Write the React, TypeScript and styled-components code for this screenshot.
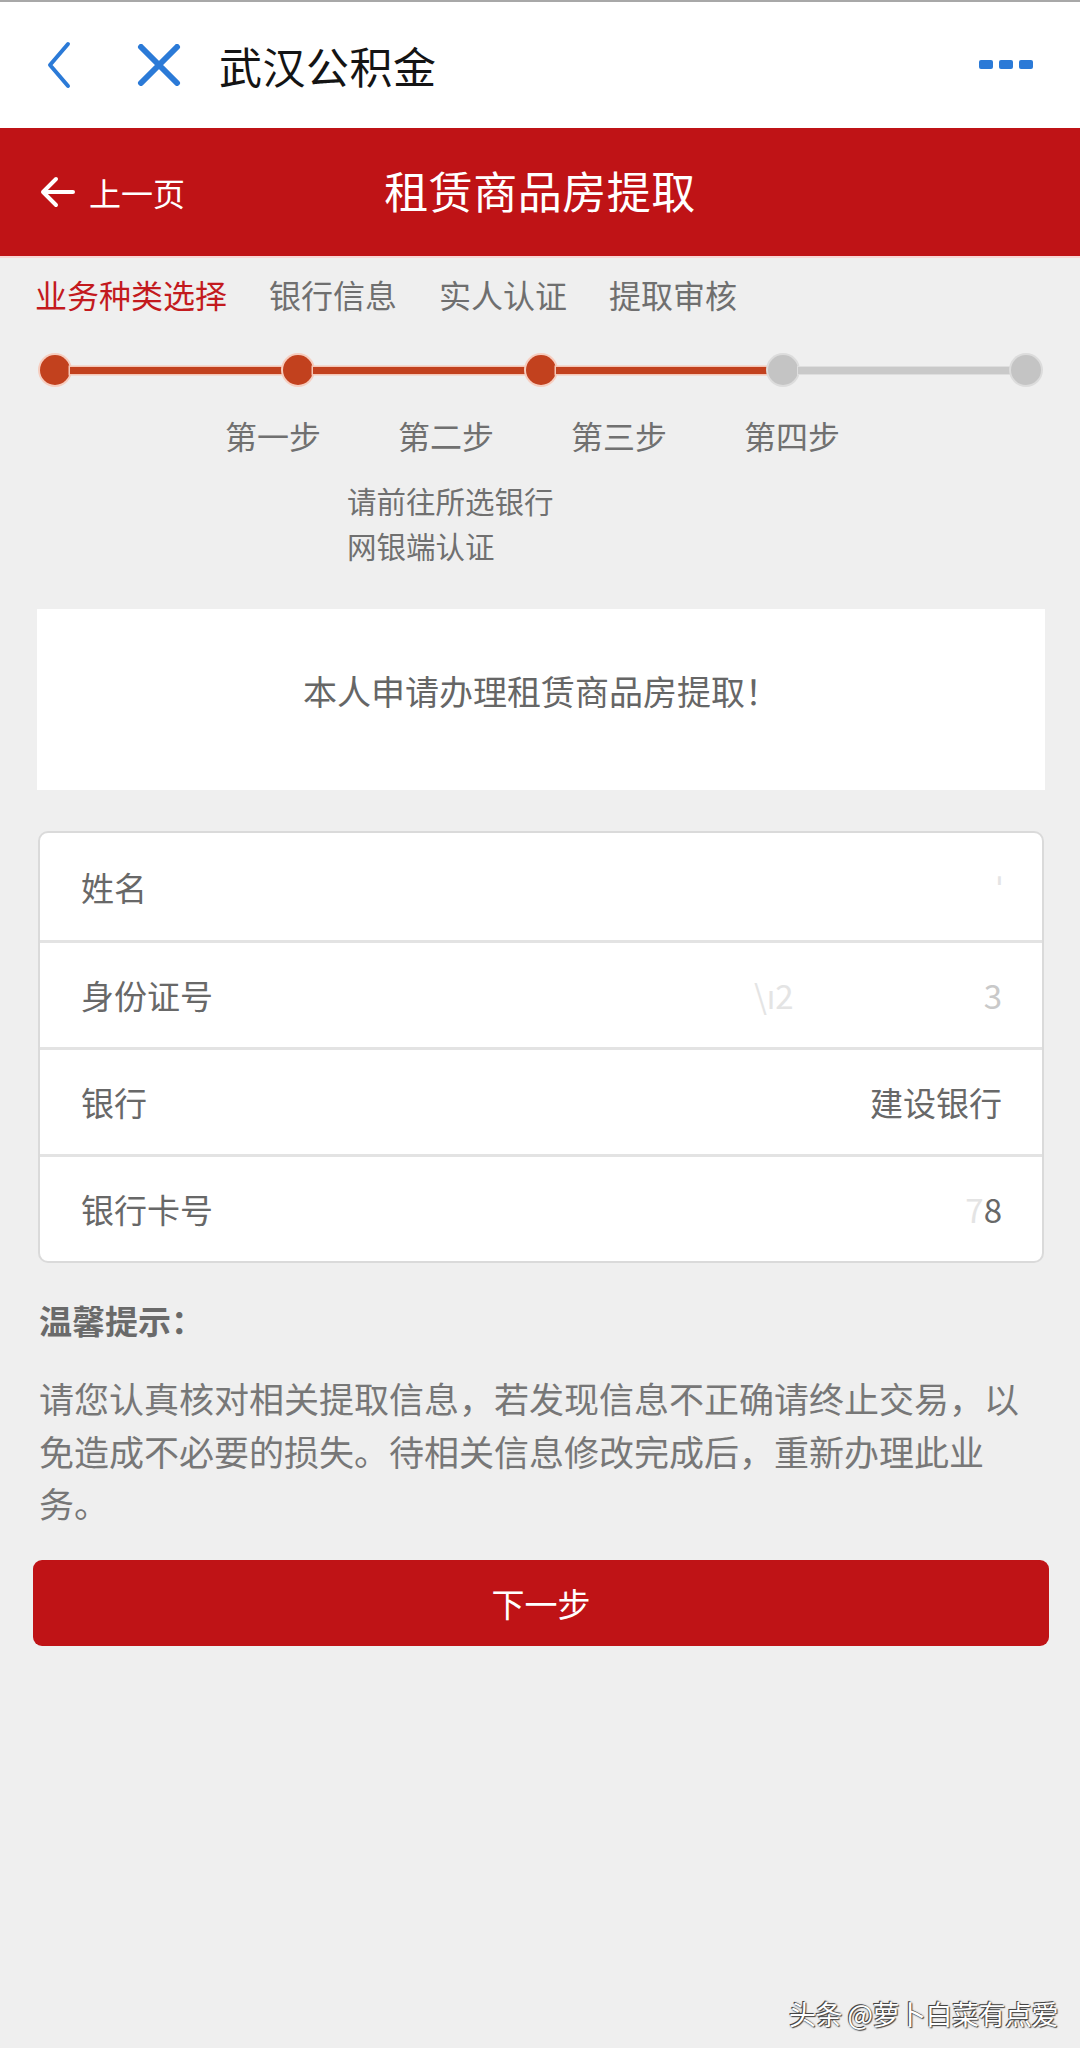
import React from "react";
import styled, { createGlobalStyle } from "styled-components";

const GlobalStyle = createGlobalStyle`
  html, body {
    margin: 0;
    padding: 0;
    background: #efefef;
  }
  body {
    font-family: "Noto Sans CJK SC", "Noto Sans", sans-serif;
    text-spacing-trim: space-all;
  }
  * { box-sizing: border-box; }
`;

const Page = styled.div`
  position: relative;
  width: 1080px;
  min-height: 2048px;
  background: #efefef;
  display: flex;
  flex-direction: column;
  overflow: hidden;
`;

const TopLine = styled.div`
  height: 2px;
  background: #a8a8a8;
`;

const Header = styled.header`
  height: 126px;
  background: #ffffff;
  display: flex;
  align-items: center;
  padding: 0 47px 0 45px;
`;

const IconButton = styled.div<{ $ml?: number }>`
  display: flex;
  align-items: center;
  margin-left: ${(p) => p.$ml ?? 0}px;
`;

const HeaderTitle = styled.h1`
  margin: 0 0 0 38px;
  font-size: 43px;
  font-weight: 400;
  color: #141414;
  letter-spacing: 0.5px;
  line-height: 1;
`;

const Spacer = styled.div`
  flex: 1;
`;

const MoreDots = styled.div`
  display: flex;
  gap: 6px;
  align-items: center;
  margin-top: -2px;
`;

const Dash = styled.span`
  width: 14px;
  height: 9px;
  border-radius: 2px;
  background: #2b7ad7;
`;

const RedBar = styled.div`
  height: 130px;
  background: #bf1316;
  display: grid;
  grid-template-columns: 1fr auto 1fr;
  align-items: center;
  border-bottom: 2px solid #f7d6d6;
`;

const BackLink = styled.div`
  display: flex;
  align-items: center;
  gap: 14px;
  padding-left: 39px;
  color: #ffffff;
  font-size: 32px;
  line-height: 1;
`;

const BarTitle = styled.div`
  color: #ffffff;
  font-size: 44px;
  line-height: 1;
  letter-spacing: 0.5px;
  margin-top: -4px;
`;

const Tabs = styled.nav`
  height: 76px;
  display: flex;
  align-items: center;
  gap: 42px;
  padding: 0 0 5px 35px;
`;

const Tab = styled.span<{ $active?: boolean }>`
  font-size: 32px;
  line-height: 1;
  color: ${(p) => (p.$active ? "#c31a1e" : "#6f6f6f")};
`;

const Progress = styled.div`
  height: 72px;
  display: flex;
  align-items: center;
  padding: 0 39px 0 40px;
`;

const Dot = styled.span<{ $done?: boolean }>`
  width: 30px;
  height: 30px;
  border-radius: 50%;
  flex: none;
  background: ${(p) => (p.$done ? "#c2411e" : "#c4c4c4")};
  box-shadow: ${(p) => (p.$done ? "0 0 0 2px #f6cdbf" : "0 0 0 2px #dcdcdc")};
`;

const Line = styled.span<{ $done?: boolean }>`
  flex: 1;
  height: 7px;
  background: ${(p) => (p.$done ? "#c2411e" : "#c9c9c9")};
  box-shadow: ${(p) => (p.$done ? "0 0 0 1.5px #f4c6b6" : "0 0 0 1px #dedede")};
`;

const StepLabels = styled.div`
  height: 58px;
  display: flex;
  align-items: center;
  gap: 77px;
  padding-left: 225px;
`;

const StepLabel = styled.span`
  font-size: 32px;
  line-height: 1;
  color: #707070;
`;

const StepNote = styled.div`
  margin: 14px 0 0 347px;
  font-size: 29.5px;
  line-height: 45px;
  color: #707070;
`;

const Statement = styled.div`
  margin: 41px 35px 0 37px;
  height: 181px;
  background: #ffffff;
  display: flex;
  align-items: center;
  justify-content: center;
  padding-bottom: 18px;
  font-size: 34px;
  color: #666666;
`;

const InfoCard = styled.div`
  margin: 41px 36px 0 38px;
  background: #ffffff;
  border: 2px solid #dadada;
  border-radius: 10px;
  overflow: hidden;
`;

const InfoRow = styled.div`
  height: 107px;
  display: flex;
  align-items: center;
  justify-content: space-between;
  padding: 0 40px 0 41px;
  & + & {
    border-top: 3px solid #e3e3e3;
  }
`;

const Label = styled.span`
  font-size: 33px;
  color: #686868;
`;

const Value = styled.span<{ $faded?: boolean }>`
  font-size: 33px;
  color: ${(p) => (p.$faded ? "#c9c9c9" : "#686868")};
`;

const FadedPart = styled.span<{ $gap?: number }>`
  color: #e4e4e4;
  margin-right: ${(p) => p.$gap ?? 0}px;
`;

const TipsTitle = styled.div`
  margin: 34px 0 0 39px;
  font-size: 33px;
  line-height: 46px;
  font-weight: 700;
  color: #6a6a6a;
`;

const TipsText = styled.p`
  margin: 29px 0 0 39px;
  width: 1002px;
  font-size: 35px;
  line-height: 52.5px;
  color: #777777;
`;

const NextButton = styled.button`
  margin: 30px 31px 0 33px;
  height: 86px;
  border: none;
  border-radius: 9px;
  background: #bf1316;
  color: #ffffff;
  font-family: inherit;
  font-size: 33px;
  cursor: pointer;
`;

const Watermark = styled.div`
  position: absolute;
  right: 22px;
  top: 1995px;
  font-family: "Noto Sans CJK SC", "Noto Sans", sans-serif;
  font-size: 27px;
  line-height: 38px;
  color: #ffffff;
  text-shadow: -1px -1px 0 #444, 1px 1px 1px #444, 0 0 2px #555;
  letter-spacing: -0.5px;
`;

const ChevronLeft = () => (
  <svg width="28" height="48" viewBox="0 0 28 48">
    <path d="M23 3 L5 24 L23 45" fill="none" stroke="#2b7ad7" strokeWidth="4" strokeLinecap="round" strokeLinejoin="round" />
  </svg>
);

const CloseX = () => (
  <svg width="44" height="42" viewBox="0 0 44 42">
    <path d="M4 3 L40 39 M40 3 L4 39" fill="none" stroke="#2b7ad7" strokeWidth="6" strokeLinecap="round" />
  </svg>
);

const ArrowLeft = () => (
  <svg width="36" height="32" viewBox="0 0 36 32">
    <path d="M17 3 L4 16 L17 29 M4 16 L34 16" fill="none" stroke="#ffffff" strokeWidth="4" strokeLinecap="round" strokeLinejoin="round" />
  </svg>
);

const tabs = ["业务种类选择", "银行信息", "实人认证", "提取审核"];
const steps = ["第一步", "第二步", "第三步", "第四步"];

export default function App() {
  const doneCount = 3;
  return (
    <Page>
      <GlobalStyle />
      <TopLine />
      <Header>
        <IconButton>
          <ChevronLeft />
        </IconButton>
        <IconButton $ml={64}>
          <CloseX />
        </IconButton>
        <HeaderTitle>武汉公积金</HeaderTitle>
        <Spacer />
        <MoreDots>
          <Dash />
          <Dash />
          <Dash />
        </MoreDots>
      </Header>
      <RedBar>
        <BackLink>
          <ArrowLeft />
          上一页
        </BackLink>
        <BarTitle>租赁商品房提取</BarTitle>
        <div />
      </RedBar>
      <Tabs>
        {tabs.map((t, i) => (
          <Tab key={t} $active={i === 0}>
            {t}
          </Tab>
        ))}
      </Tabs>
      <Progress>
        {[0, 1, 2, 3, 4].map((i) => (
          <React.Fragment key={i}>
            {i > 0 && <Line $done={i < doneCount + 1} />}
            <Dot $done={i < doneCount} />
          </React.Fragment>
        ))}
      </Progress>
      <StepLabels>
        {steps.map((s) => (
          <StepLabel key={s}>{s}</StepLabel>
        ))}
      </StepLabels>
      <StepNote>
        请前往所选银行
        <br />
        网银端认证
      </StepNote>
      <Statement>本人申请办理租赁商品房提取！</Statement>
      <InfoCard>
        <InfoRow>
          <Label>姓名</Label>
          <Value $faded>
            <FadedPart>ˈ</FadedPart>
          </Value>
        </InfoRow>
        <InfoRow>
          <Label>身份证号</Label>
          <Value $faded>
            <FadedPart $gap={190}>\ı2</FadedPart>3
          </Value>
        </InfoRow>
        <InfoRow>
          <Label>银行</Label>
          <Value>建设银行</Value>
        </InfoRow>
        <InfoRow>
          <Label>银行卡号</Label>
          <Value>
            <FadedPart>7</FadedPart>8
          </Value>
        </InfoRow>
      </InfoCard>
      <TipsTitle>温馨提示：</TipsTitle>
      <TipsText>
        请您认真核对相关提取信息，若发现信息不正确请终止交易，以免造成不必要的损失。待相关信息修改完成后，重新办理此业务。
      </TipsText>
      <NextButton>下一步</NextButton>
      <Watermark>头条 @萝卜白菜有点爱</Watermark>
    </Page>
  );
}
